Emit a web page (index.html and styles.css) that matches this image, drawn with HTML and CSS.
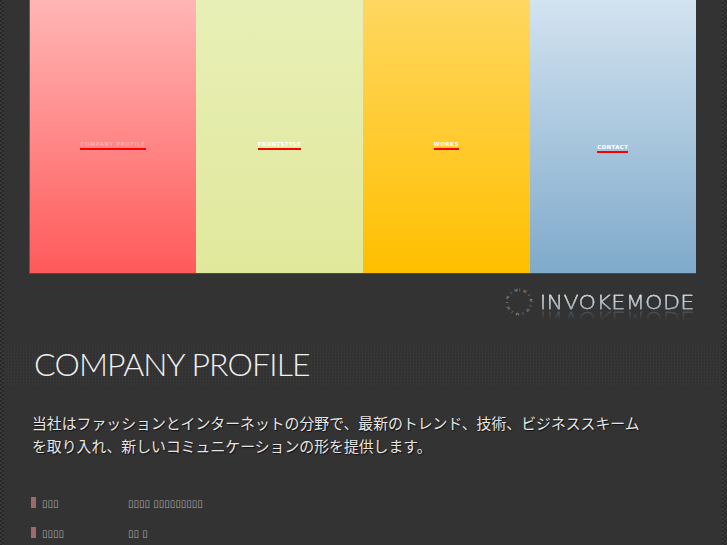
FILE: index.html
```html
<!DOCTYPE html>
<html lang="ja">
<head>
<meta charset="utf-8">
<title>COMPANY PROFILE | INVOKEMODE</title>
<link rel="stylesheet" href="styles.css">
</head>
<body>
<div class="page">
  <nav class="nav">
    <a class="panel panel-company" href="#"><span class="label">COMPANY PROFILE</span></a>
    <a class="panel panel-front" href="#"><span class="label">FRONTSTYLE</span></a>
    <a class="panel panel-works" href="#"><span class="label">WORKS</span></a>
    <a class="panel panel-contact" href="#"><span class="label">CONTACT</span></a>
  </nav>
  <div class="brand">
    <svg class="ring" viewBox="0 0 28 28" width="28" height="28">
      <defs><path id="ringpath" d="M14 3.2a10.8 10.8 0 1 1-.01 0"/></defs>
      <text class="ring-text"><textPath href="#ringpath" textLength="66">IMIMIMIMIMIMIM</textPath></text>
    </svg>
    <span class="brand-name">INVOKEMODE</span>
  </div>
  <h1 class="title"><span>COMPANY PROFILE</span></h1>
  <p class="lead">当社はファッションとインターネットの分野で、最新のトレンド、技術、ビジネススキーム<br>を取り入れ、新しいコミュニケーションの形を提供します。</p>
  <dl class="facts">
    <div class="fact"><dt>▯▯▯</dt><dd>▯▯▯▯ ▯▯▯▯▯▯▯▯▯</dd></div>
    <div class="fact"><dt>▯▯▯▯</dt><dd>▯▯ ▯</dd></div>
  </dl>
</div>
</body>
</html>
```
FILE: styles.css
```css
* { box-sizing: border-box; }
html, body { margin: 0; height: 100%; overflow: hidden; }
body {
  background-color: #2a2a2a;
  background-image: repeating-conic-gradient(#3a3a3a 0 25%, #262626 0 50%);
  background-size: 4px 4px;
  font-family: "Noto Sans CJK JP", sans-serif;
}
.page {
  margin: 0 5px 0 4px;
  height: 545px;
  background: #333;
  overflow: hidden;
}
.nav {
  display: grid;
  grid-template-columns: 166px 167px 166.5px 166.5px;
  margin-left: 26px;
  width: 666px;
  height: 274px;
  border-bottom: 1px solid #4a4a4a;
  box-shadow: -1px 0 0 #5c5c5c;
}
.panel {
  display: flex;
  justify-content: center;
  align-items: flex-start;
  padding-top: 141px;
  text-decoration: none;
}
.panel-company { background: linear-gradient(#ffb6b6, #ff5a5a); }
.panel-company .label { font-weight: 400; letter-spacing: .9px; color: rgba(255, 255, 255, .5); }
.panel-front { background: linear-gradient(#e8efb6, #e0e89c); }
.panel-works { background: linear-gradient(#ffd760, #ffbf00); }
.panel-contact { background: linear-gradient(#d3e3f0, #7faacb); padding-top: 144px; }
.label {
  display: block;
  height: 9px;
  font: 700 5.5px/6px "DejaVu Sans", sans-serif;
  color: #fff;
  letter-spacing: .35px;
  white-space: nowrap;
  border-bottom: 2px solid #f00;
}
.brand {
  display: flex;
  justify-content: flex-end;
  align-items: center;
  gap: 22px;
  height: 56px;
  padding: 0 27px 0 0;
}
.ring { display: block; }
.ring-text { font: 4px "Liberation Sans", sans-serif; fill: #aaa; }
.brand-name {
  font: 200 20px/20px "DejaVu Sans", sans-serif;
  letter-spacing: .3px;
  background: linear-gradient(#eef2f4 10%, #95a3af 90%);
  -webkit-background-clip: text;
  background-clip: text;
  -webkit-text-fill-color: transparent;
  -webkit-text-stroke: .3px #b9c4cc;
  -webkit-box-reflect: below -3px linear-gradient(transparent 45%, rgba(255, 255, 255, .3));
  transform: scaleX(1.11);
  transform-origin: right center;
}
.title {
  margin: 15px 0 0;
  height: 40px;
  padding-left: 30px;
  background-image: repeating-conic-gradient(#373737 0 25%, #303030 0 50%);
  background-size: 3px 3px;
  font: 300 32px/37px "Lato", sans-serif;
  color: #f0f0f0;
  letter-spacing: -.85px;
  white-space: nowrap;
}
.lead {
  margin: 27px 0 0 28px;
  font-size: 14.87px;
  line-height: 22.5px;
  font-weight: 400;
  color: #e6e6e6;
  text-shadow: 1px 1px 1px #111;
  white-space: nowrap;
}
.facts { margin: 40px 0 0 27px; }
.fact {
  position: relative;
  display: flex;
  height: 30px;
  padding-left: 11px;
  font: 10px/14px "DejaVu Sans", sans-serif;
  color: #aaa;
}
.fact::before {
  content: "";
  position: absolute;
  left: 0;
  top: 0;
  width: 5px;
  height: 11px;
  background: #9c6a6c;
}
.fact dt { width: 86px; }
.fact dd { margin: 0; }
```
